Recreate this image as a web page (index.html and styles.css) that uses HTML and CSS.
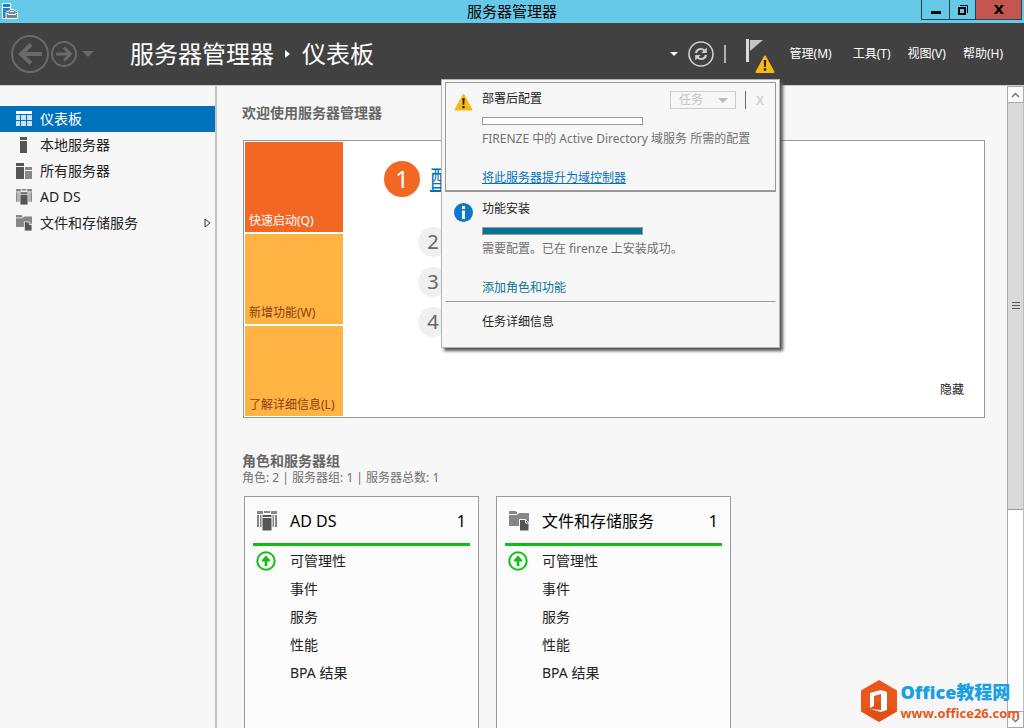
FILE: index.html
```html
<!DOCTYPE html>
<html lang="zh-CN">
<head>
<meta charset="utf-8">
<title>服务器管理器</title>
<link rel="stylesheet" href="styles.css">
</head>
<body>
<svg class="defs" aria-hidden="true">
  <symbol id="i-adds" viewBox="0 0 20 20">
    <path fill="#868686" d="M0 0h6v3H0zM7 0h6v2H7zM14 0h6v3h-6zM0 4h2v12H0zM3 4h3v12H3zM14 4h3v12h-3zM18 4h2v12h-2z"/>
    <path fill="#555" stroke="#fafafa" d="M5 3.500h10V20H5z"/>
    <path fill="#fafafa" d="M5 6h10v1H5z"/>
  </symbol>
  <symbol id="i-files" viewBox="0 0 20 20">
    <path fill="#868686" d="M0 0h6l2 1v2H0zM0 4h8l2-2h10v13H0z"/>
    <path fill="#555" stroke="#fafafa" d="M10.500 8.500h6l3.500 3.500V20h-9.500z"/>
    <path fill="none" stroke="#fafafa" d="M16.500 8.500V12H20"/>
  </symbol>
  <symbol id="i-warn" viewBox="0 0 20 18">
    <path fill="#fdb913" stroke="#fdb913" stroke-linejoin="round" stroke-width="2" d="M10 1.500 18.500 17h-17z"/>
    <path fill="#222" d="M8.700 5h2.600l-.5 7H9.200zM8.800 13.300h2.400v2.400H8.800z"/>
  </symbol>
  <symbol id="i-up" viewBox="0 0 20 20">
    <circle cx="10" cy="10" r="8.700" fill="none" stroke="#10c010" stroke-width="2"/>
    <path fill="#10c010" d="M10 4.500 14 9v1.500h-2.700V15H8.700v-4.500H6V9z"/>
  </symbol>
</svg>

<div class="titlebar">
  <svg class="app-icon" viewBox="0 0 16 16">
    <path fill="#1785c9" stroke="#fff" d="M.5.500h8v15h-8z"/><path stroke="#fff" d="M1 4.500h7"/>
    <path fill="#6d8797" stroke="#fff" d="M4 9.500 5.500 8h1.500l1-1.500h4L13 8h1l1.500 1.500v6H4z"/><path stroke="#fff" fill="none" d="M4.500 10.500h2v1h7v-1h2M8 8.500h4"/>
  </svg>
  <span class="window-title">服务器管理器</span>
  <div class="window-buttons">
    <button class="win-btn" aria-label="最小化"><svg width="12" height="12"><path d="M1 7h10v3H1z"/></svg></button>
    <button class="win-btn win-max" aria-label="还原"><svg width="12" height="12" fill="none" stroke="#000"><path stroke-width="2" d="M2 4h6v6H2z"/><path d="M3 1.500h7.500V9"/></svg></button>
    <button class="win-btn win-close" aria-label="关闭"><svg width="12" height="12"><path d="M1 1h3l2 3 2-3h3L7.600 5.500 11 10H8L6 7.200 4 10H1l3.400-4.500z"/></svg></button>
  </div>
</div>

<header class="header">
  <div class="history">
    <button class="plain" aria-label="后退"><svg width="38" height="38" fill="none" stroke="#6a6a6a"><circle cx="19" cy="19" r="18" stroke-width="2"/><path stroke-width="4" d="M31 19H10M20 9.500 10 19l10 9.500"/></svg></button>
    <button class="plain" aria-label="前进"><svg width="26" height="26" fill="none" stroke="#6a6a6a"><circle cx="13" cy="13" r="12" stroke-width="2"/><path stroke-width="3" d="M5 13h14M13 6.500l6.500 6.500-6.500 6.500"/></svg></button>
    <button class="plain" aria-label="历史记录"><svg width="12" height="6"><path fill="#6a6a6a" d="M0 0h12L6 6z"/></svg></button>
  </div>
  <h1 class="breadcrumb">服务器管理器<svg width="6" height="8"><path fill="#fff" d="M0 0l5 4-5 4z"/></svg>仪表板</h1>
  <div class="tools">
    <button class="plain" aria-label="更多"><svg width="8" height="4"><path fill="#fff" d="M0 0h8L4 4z"/></svg></button>
    <button class="plain" aria-label="刷新"><svg width="26" height="26" fill="none" stroke="#cfcfcf"><circle cx="13" cy="13" r="12" stroke-width="1.600"/><path stroke-width="2.200" d="M8 12c.6-3.500 5-5.500 8.500-2.500M18 14c-.6 3.500-5 5.500-8.500 2.500"/><path fill="#cfcfcf" stroke="none" d="M18.800 6.500V12h-5.500zM7.200 19.500V14h5.500z"/></svg></button>
    <span class="divider"></span>
    <button class="plain flag" aria-label="通知"><svg width="30" height="36"><path fill="#dcdcdc" d="M0 1h3v23H0z"/><path fill="#c4c4c4" d="M4 2h13L4 13z"/><use href="#i-warn" x="9" y="17" width="20" height="18"/></svg></button>
  </div>
  <nav class="menu">
    <button class="plain">管理(M)</button>
    <button class="plain">工具(T)</button>
    <button class="plain">视图(V)</button>
    <button class="plain">帮助(H)</button>
  </nav>

  <section class="popup">
    <article class="task task-selected">
      <svg class="task-icon" width="19" height="18"><use href="#i-warn"/></svg>
      <div class="task-body">
        <div class="task-head">
          <h2>部署后配置</h2>
          <button class="task-menu" disabled>任务<svg width="10" height="5"><path fill="#bbb" d="M0 0h10L5 5z"/></svg></button>
          <span class="task-divider"></span>
          <button class="task-close" disabled>X</button>
        </div>
        <div class="bar"></div>
        <p>FIRENZE 中的 Active Directory 域服务 所需的配置</p>
        <a href="#" class="link-main">将此服务器提升为域控制器</a>
      </div>
    </article>
    <article class="task">
      <svg class="task-icon" width="19" height="19"><circle cx="9.500" cy="9.500" r="9.500" fill="#0a78cf"/><path fill="#fff" d="M8 3h3v3H8zM8 7.500h3V16H8z"/></svg>
      <div class="task-body">
        <div class="task-head"><h2>功能安装</h2></div>
        <div class="bar bar-full"></div>
        <p>需要配置。已在 firenze 上安装成功。</p>
        <a href="#" class="link-teal">添加角色和功能</a>
      </div>
    </article>
    <a href="#" class="details">任务详细信息</a>
  </section>
</header>

<div class="body">
  <nav class="sidebar">
    <a href="#" class="nav-item active"><svg width="16" height="16"><path fill="#fff" d="M0 0h16v3H0z"/><path fill="#c9e2f2" d="M0 4h4v5H0zM0 10h4v5H0zM5 4h5v5H5zM5 10h5v5H5zM11 4h5v5h-5zM11 10h5v5h-5z"/></svg>仪表板</a>
    <a href="#" class="nav-item"><svg width="16" height="16"><path fill="#555" d="M4 0h7v3H4zM4 4h7v12H4z"/></svg>本地服务器</a>
    <a href="#" class="nav-item"><svg width="16" height="16"><path fill="#555" d="M0 0h8v3H0zM0 4h8v12H0z"/><path fill="#888" d="M9 4h7v3H9zM9 8h7v8H9z"/></svg>所有服务器</a>
    <a href="#" class="nav-item"><svg width="16" height="16"><use href="#i-adds"/></svg>AD DS</a>
    <a href="#" class="nav-item"><svg width="16" height="16"><use href="#i-files"/></svg>文件和存储服务<svg class="expand" width="7" height="10" fill="none" stroke="#333"><path d="M1 1l5 4-5 4z"/></svg></a>
  </nav>

  <main class="content">
    <h2 class="section-title">欢迎使用服务器管理器</h2>
    <section class="welcome">
      <div class="tiles">
        <button class="tile tile-on">快速启动(Q)</button>
        <button class="tile">新增功能(W)</button>
        <button class="tile">了解详细信息(L)</button>
      </div>
      <ol class="steps">
        <li class="step-main"><span class="num num-main">1</span><a href="#">配</a></li>
        <li><span class="num">2</span></li>
        <li><span class="num">3</span></li>
        <li><span class="num">4</span></li>
      </ol>
      <button class="plain hide">隐藏</button>
    </section>

    <h2 class="section-title">角色和服务器组</h2>
    <p class="summary">角色: 2 | 服务器组: 1 | 服务器总数: 1</p>
    <div class="cards">
      <section class="card">
        <h3><svg width="20" height="20"><use href="#i-adds"/></svg>AD DS<span class="count">1</span></h3>
        <ul>
          <li><svg width="20" height="20"><use href="#i-up"/></svg>可管理性</li>
          <li>事件</li><li>服务</li><li>性能</li><li>BPA 结果</li>
        </ul>
      </section>
      <section class="card">
        <h3><svg width="20" height="20"><use href="#i-files"/></svg>文件和存储服务<span class="count">1</span></h3>
        <ul>
          <li><svg width="20" height="20"><use href="#i-up"/></svg>可管理性</li>
          <li>事件</li><li>服务</li><li>性能</li><li>BPA 结果</li>
        </ul>
      </section>
    </div>
  </main>

  <div class="scrollbar">
    <button class="scroll-btn" aria-label="向上"><svg width="9" height="6" fill="none" stroke="#777" stroke-width="1.500"><path d="M1 5l3.500-3.500L8 5"/></svg></button>
    <div class="track"><div class="thumb"><svg width="8" height="8"><path fill="#555" d="M0 0h8v1H0zM0 3h8v1H0zM0 6h8v1H0z"/></svg></div></div>
    <button class="scroll-btn" aria-label="向下"><svg width="9" height="6" fill="none" stroke="#777" stroke-width="1.500"><path d="M1 1l3.500 3.500L8 1"/></svg></button>
  </div>
</div>

<div class="watermark">
  <svg width="38" height="42"><path fill="#e9571c" d="M19 0 37 10.500v21L19 42 1 31.500v-21z"/><path fill="#d4450f" d="M1 31.500 19 42l18-10.500L19 21z" opacity=".4"/><path fill="#fff" d="M10 13 21 10l6 2v18l-6 2-11-3 11 1V14l-7 2v10l-4 2z"/></svg>
  <div><strong class="mark-name">Office教程网</strong><span class="mark-url">www.office26.com</span></div>
</div>
</body>
</html>
```
FILE: styles.css
```css
* { box-sizing: border-box; }

body {
  margin: 0;
  height: 100vh;
  display: flex;
  flex-direction: column;
  position: relative;
  overflow: hidden;
  background: #f7f7f7;
  color: #222;
  font: 12px/16px "Noto Sans", "Noto Sans CJK SC", sans-serif;
}

h1, h2, h3, p, ul, ol { margin: 0; padding: 0; font-weight: 400; list-style: none; }
button { font: inherit; color: inherit; padding: 0; }
a { color: inherit; text-decoration: none; }
svg { display: block; flex: none; }
.defs { position: absolute; width: 0; height: 0; }
.plain { border: 0; background: none; }

.titlebar {
  flex: none;
  height: 23px;
  display: grid;
  grid-template-columns: 1fr auto 1fr;
  background: #66c9e8;
}
.app-icon { width: 16px; height: 16px; margin: 3px 2px; }
.window-title { color: #000; font-size: 15px; line-height: 23px; }
.window-buttons { justify-self: end; display: flex; height: 20px; margin-right: 2px; }
.win-btn {
  width: 29px;
  display: flex;
  align-items: center;
  justify-content: center;
  border: 1px solid #23454f;
  border-top: 0;
  background: none;
}
.win-max { width: 26px; border-left: 0; }
.win-close { width: 46px; border-left: 0; background: #c4564f; }

.header {
  flex: none;
  height: 62px;
  position: relative;
  z-index: 1;
  display: flex;
  align-items: center;
  padding: 0 21px 0 11px;
  background: #414141;
  color: #fff;
}
.history { display: flex; align-items: center; gap: 2px; width: 119px; }
.history button:last-child { margin-left: 3px; }
.breadcrumb { display: flex; align-items: center; gap: 11px; font-size: 24px; line-height: 32px; }
.tools { display: flex; align-items: center; gap: 10px; margin-left: auto; }
.divider { width: 2px; height: 18px; background: #b0b0b0; }
.flag { margin-left: 10px; }
.flag svg { margin-top: 4px; }
.menu { display: flex; gap: 17px; margin-left: 14px; }
.menu button:first-child { margin-right: 4px; }

.popup {
  position: absolute;
  top: 56px;
  right: 244px;
  width: 339px;
  height: 269px;
  padding: 2px 3px;
  border: 1px solid #b5b5b5;
  background: #f7f7f7;
  color: #222;
  box-shadow: 3px 3px 3px #555;
}
.task { display: flex; height: 110px; padding: 8px; border: 1px solid transparent; border-bottom-color: #999; }
.task-selected { border: 1px solid #999; border-bottom-width: 2px; }
.task-icon { margin-top: 2px; }
.task-body { flex: 1; margin-left: 9px; }
.task-head { display: flex; height: 18px; }
.task h2 { flex: 1; font-size: 12px; line-height: 16px; }
.task-menu {
  width: 66px;
  display: flex;
  align-items: center;
  justify-content: space-between;
  padding: 0 7px 0 8px;
  border: 1px solid #ccc;
  background: none;
  color: #c4c4c4;
}
.task-divider { width: 1px; margin: 0 7px 0 9px; background: #666; }
.task-close { width: 14px; border: 0; background: none; color: #c4c4c4; font-size: 13px; }
.bar { width: 161px; height: 8px; margin-top: 8px; border: 1px solid #999; background: #fff; }
.bar-full { background: #067492; }
.task p { margin: 6px 0 23px; color: #707070; white-space: nowrap; }
.task-body a { display: block; width: max-content; }
.link-main { color: #0072bc; text-decoration: underline; }
.link-teal { color: #067492; }
.details { display: inline-block; margin: 12px 0 0 37px; }

.body { flex: 1; min-height: 0; display: flex; border-top: 1px solid #cfcfcf; }
.sidebar { flex: none; width: 217px; padding: 20px 0; border-right: 2px solid #c4c4c4; }
.nav-item { display: flex; align-items: center; height: 26px; padding: 0 4px 0 16px; font-size: 14px; }
.nav-item svg:first-child { margin-right: 8px; }
.active { background: #0072bc; color: #fff; }
.expand { margin-left: auto; }

.content { flex: 1; padding: 17px 22px 0 25px; overflow: hidden; }
.section-title { color: #666; font-size: 14px; font-weight: 700; line-height: 20px; }
.welcome {
  display: flex;
  margin: 17px 0 33px 1px;
  padding: 1px;
  border: 1px solid #999;
  background: #fff;
}
.tiles { display: grid; gap: 2px; width: 98px; }
.tile {
  display: flex;
  align-items: flex-end;
  height: 90px;
  padding: 0 0 3px 4px;
  border: 0;
  background: #ffb343;
  color: #8a400c;
  white-space: nowrap;
}
.tile-on { background: #f26724; color: #fff; }
.steps { flex: 1; display: grid; align-content: start; gap: 10px; padding: 19px 0 0 75px; }
.step-main { display: flex; align-items: center; gap: 10px; margin-left: -34px; padding-bottom: 20px; color: #0072bc; font-size: 24px; line-height: 36px; }
.step-main a { text-decoration: underline; }
.num {
  display: block;
  width: 30px;
  border-radius: 50%;
  background: #f0f0f0;
  color: #666;
  font-size: 20px;
  line-height: 30px;
  text-align: center;
}
.num-main { width: 36px; background: #f26724; color: #fff; font-size: 24px; line-height: 36px; }
.hide { align-self: flex-end; margin: 0 19px 18px 0; }

.summary { color: #707070; line-height: 14px; }
.cards { display: flex; gap: 17px; margin: 11px 2px 0; }
.card { width: 235px; height: 260px; padding: 8px; border: 1px solid #999; background: #fcfcfc; }
.card h3 {
  display: flex;
  align-items: center;
  height: 41px;
  padding: 0 4px 6px;
  border-bottom: 3px solid #10c010;
  color: #000;
  font-size: 16px;
}
.card h3 svg { margin-right: 13px; }
.count { margin-left: auto; }
.card ul { padding-top: 1px; }
.card li { display: flex; align-items: center; height: 28px; padding-left: 37px; font-size: 14px; }
.card li svg { margin: 0 14px 0 -34px; }

.scrollbar { flex: none; width: 17px; display: flex; flex-direction: column; border-left: 1px solid #aaa; background: #fff; }
.scroll-btn {
  height: 17px;
  display: flex;
  align-items: center;
  justify-content: center;
  border: 1px solid #aaa;
  border-left: 0;
  background: #fcfcfc;
}
.track { flex: 1; border-right: 1px solid #bbb; }
.thumb {
  height: 67%;
  display: flex;
  align-items: center;
  justify-content: center;
  border-bottom: 1px solid #999;
  background: #dadada;
}

.watermark { position: absolute; right: 4px; bottom: 6px; z-index: 2; display: flex; gap: 2px; font-family: "Open Sans", "Noto Sans CJK SC", sans-serif; }
.watermark div { display: grid; align-content: center; font-weight: 700; }
.mark-name { color: #1ba0e2; font-size: 18px; line-height: 24px; }
.mark-url { color: #e9571c; font-size: 13px; line-height: 18px; }
```
